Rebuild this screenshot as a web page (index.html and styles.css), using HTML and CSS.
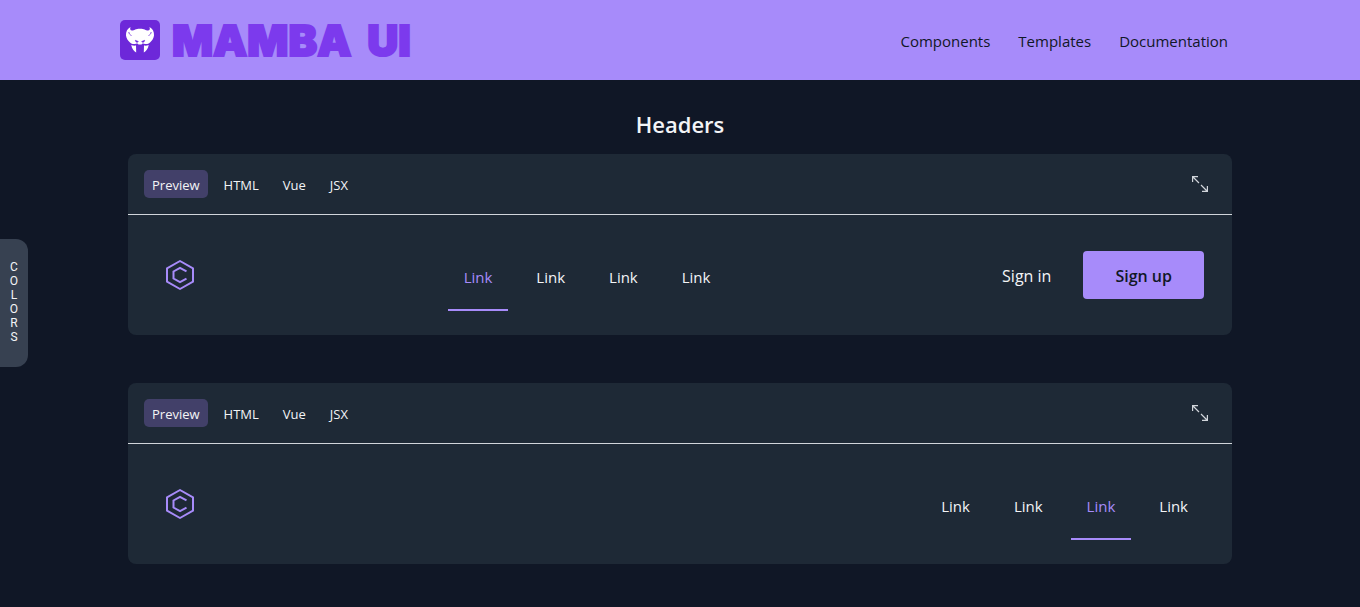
FILE: index.html
```html
<!DOCTYPE html>
<html lang="en">
<head>
<meta charset="utf-8">
<meta name="viewport" content="width=device-width, initial-scale=1">
<title>Mamba UI - Headers</title>
<link rel="stylesheet" href="styles.css">
</head>
<body>
<svg class="sprite" aria-hidden="true">
  <symbol id="hex" viewBox="0 0 32 32">
    <path d="M16 2 29 9.300v13.400L16 30 3 22.700V9.300Z" fill="none" stroke="currentColor" stroke-width="2" stroke-linejoin="round"/>
    <path d="M22.500 12.300 16 8.800l-6.500 3.700v7L16 23.200l6.500-3.500" fill="none" stroke="currentColor" stroke-width="2"/>
  </symbol>
  <symbol id="expand" viewBox="0 0 16 16">
    <path d="M.600 6V.600H6M10 15.400h5.400V10M1 1l6 6M9 9l6 6" fill="none" stroke="currentColor" stroke-width="1.200"/>
  </symbol>
</svg>

<header class="topbar">
  <div class="topbar-inner">
    <a class="brand" href="#">
      <svg class="brand-mark" viewBox="0 0 40 40" aria-hidden="true">
        <rect width="40" height="40" rx="5" fill="#6d28d9"/>
        <path d="M10.500 7C7.500 8.500 5.700 11.500 6 15.500c.3 3 2 5 4 7 1.200 1 2.500 1.500 4 1.500 1.500 0 2.500-.6 3.500-.6l1 1.100h3l1-1.100c1 0 2 .6 3.500.6s2.800-.5 4-1.500c2-2 3.700-4 4-7 .3-4-1.500-7-4.500-8.500.7 2 .3 3.500-1.500 3.500-2.500 0-3.500-1.700-8-1.700s-5.500 1.700-8 1.700C10.200 10.500 9.800 9 10.500 7Z" fill="#fff"/>
        <path d="M11.300 25c1.500.6 3 .8 4.700.5l.2 7c-2.500-1.500-4.400-4-4.900-7.500ZM28.700 25c-1.500.6-3 .8-4.700.5l-.2 7c2.500-1.500 4.400-4 4.900-7.500Z" fill="#fff"/>
        <path d="M8.800 12c.2 1.700 1.200 3 2.700 3.500M31.200 12c-.2 1.700-1.200 3-2.700 3.500" fill="none" stroke="#6d28d9" stroke-width=".8"/>
        <path d="m15.300 20.300 3 1.200c-.2 1.200-2.700 1.200-3-1.200ZM24.700 20.300l-3 1.200c.2 1.200 2.700 1.200 3-1.200Z" fill="#6d28d9" stroke="#6d28d9" stroke-width=".6"/>
      </svg>
      <span class="wordmark"><span>MAMBA</span> <span>UI</span></span>
    </a>
    <nav class="topnav">
      <a href="#">Components</a>
      <a href="#">Templates</a>
      <a href="#">Documentation</a>
    </nav>
  </div>
</header>

<button class="colors-tab" type="button" aria-label="Colors"><span>C</span><span>O</span><span>L</span><span>O</span><span>R</span><span>S</span></button>

<main class="content">
  <h1 class="title">Headers</h1>

  <section class="card">
    <div class="toolbar">
      <div class="tabs">
        <button class="tab tab-active" type="button">Preview</button>
        <button class="tab" type="button">HTML</button>
        <button class="tab" type="button">Vue</button>
        <button class="tab" type="button">JSX</button>
      </div>
      <button class="expand" type="button" aria-label="Expand"><svg><use href="#expand"/></svg></button>
    </div>
    <div class="preview">
      <a class="logo" href="#" aria-label="Back to homepage"><svg><use href="#hex"/></svg></a>
      <ul class="links">
        <li><a class="link link-active" href="#">Link</a></li>
        <li><a class="link" href="#">Link</a></li>
        <li><a class="link" href="#">Link</a></li>
        <li><a class="link" href="#">Link</a></li>
      </ul>
      <div class="actions">
        <button class="btn" type="button">Sign in</button>
        <button class="btn btn-primary" type="button">Sign up</button>
      </div>
    </div>
  </section>

  <section class="card">
    <div class="toolbar">
      <div class="tabs">
        <button class="tab tab-active" type="button">Preview</button>
        <button class="tab" type="button">HTML</button>
        <button class="tab" type="button">Vue</button>
        <button class="tab" type="button">JSX</button>
      </div>
      <button class="expand" type="button" aria-label="Expand"><svg><use href="#expand"/></svg></button>
    </div>
    <div class="preview">
      <a class="logo" href="#" aria-label="Back to homepage"><svg><use href="#hex"/></svg></a>
      <ul class="links">
        <li><a class="link" href="#">Link</a></li>
        <li><a class="link" href="#">Link</a></li>
        <li><a class="link link-active" href="#">Link</a></li>
        <li><a class="link" href="#">Link</a></li>
      </ul>
    </div>
  </section>
</main>
</body>
</html>
```
FILE: styles.css
```css
* { box-sizing: border-box; }

body {
  margin: 0;
  background: #101726;
  color: #f3f4f6;
  font-family: "Segoe UI", "Open Sans", "Noto Sans", sans-serif;
  font-size: 15px;
  line-height: 24px;
}

a { color: inherit; text-decoration: none; }

button {
  border: 0;
  background: none;
  color: inherit;
  font: inherit;
  cursor: pointer;
}

.sprite { display: none; }

.topbar { background: #a78bfa; color: #111827; }

.topbar-inner {
  display: flex;
  align-items: center;
  justify-content: space-between;
  max-width: 1136px;
  height: 80px;
  margin: 0 auto;
  padding: 0 20px 0 8px;
}

.brand { display: flex; align-items: center; gap: 12px; }
.brand-mark { width: 40px; height: 40px; }

.wordmark {
  display: flex;
  gap: 16px;
  padding-bottom: 1px;
  color: #7c3aed;
  font-family: Inter, sans-serif;
  font-size: 43px;
  font-weight: 900;
  line-height: 38px;
  -webkit-text-stroke: 2px #7c3aed;
}

.topnav { display: flex; gap: 28px; padding-top: 2px; }

.colors-tab {
  position: fixed;
  top: 239px;
  left: 0;
  display: flex;
  flex-direction: column;
  align-items: center;
  width: 28px;
  padding: 21px 0 23px;
  border-radius: 0 12px 12px 0;
  background: #374151;
  font-family: Roboto, sans-serif;
  font-size: 12px;
  line-height: 14px;
}

.content {
  max-width: 1136px;
  margin: 0 auto;
  padding: 28px 16px 43px;
}

.title {
  margin: 0 0 14px;
  font-size: 22px;
  font-weight: 600;
  line-height: 32px;
  text-align: center;
}

.card {
  border-radius: 8px;
  background: #1e2936;
}

.card + .card { margin-top: 48px; }

.toolbar {
  display: flex;
  align-items: center;
  justify-content: space-between;
  padding: 16px;
  border-bottom: 1px solid #d1d5db;
}

.tabs { display: flex; gap: 8px; }

.tab {
  padding: 5px 8px 3px;
  border-radius: 5px;
  font-size: 13px;
  line-height: 20px;
}

.tab-active { background: #424069; }

.expand { display: flex; padding: 0 8px; color: #d1d5db; }
.expand svg { width: 16px; height: 16px; }

.preview {
  display: flex;
  align-items: center;
  justify-content: space-between;
  height: 120px;
  padding: 28px;
}

.logo { display: flex; padding: 8px; color: #a78bfa; }
.logo svg { width: 32px; height: 32px; }

.links {
  display: flex;
  gap: 12px;
  height: 64px;
  margin: 0;
  padding: 0;
  list-style: none;
}

.link {
  display: flex;
  align-items: center;
  height: 68px;
  padding: 2px 16px 0;
  border-bottom: 2px solid transparent;
}

.link-active { border-color: #a78bfa; color: #a78bfa; }

.actions { display: flex; font-size: 16px; }
.btn { padding: 13px 32px 11px; border-radius: 4px; }
.btn-primary { background: #a78bfa; color: #111827; font-weight: 600; }
```
